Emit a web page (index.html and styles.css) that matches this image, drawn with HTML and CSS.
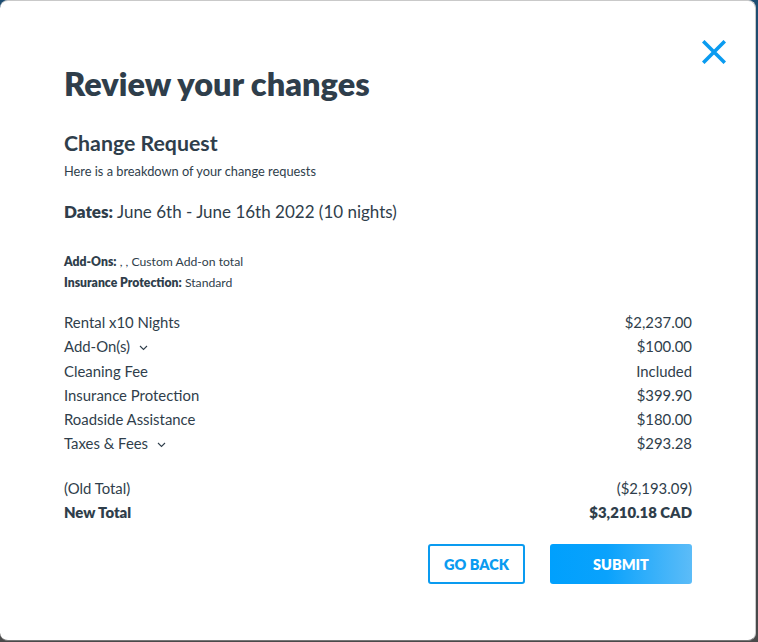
FILE: index.html
```html
<!DOCTYPE html>
<html>
<head>
<meta charset="utf-8">
<link rel="stylesheet" href="styles.css">
</head>
<body>
<div class="modal">
  <button class="close" aria-label="Close">
    <svg width="24" height="24" viewBox="0 0 24 24"><path d="M2.5 2.5 L21.5 21.5 M21.5 2.5 L2.5 21.5" stroke="#0a9bf0" stroke-width="3.6" stroke-linecap="square" fill="none"/></svg>
  </button>
  <h1 class="title">Review your changes</h1>
  <h2 class="subtitle">Change Request</h2>
  <p class="intro">Here is a breakdown of your change requests</p>
  <p class="dates"><b>Dates:</b> June 6th - June 16th 2022 (10 nights)</p>
  <div class="meta">
    <p><b>Add-Ons:</b> , , Custom Add-on total</p>
    <p><b>Insurance Protection:</b> Standard</p>
  </div>
  <div class="items">
    <div class="row"><span>Rental x10 Nights</span><span>$2,237.00</span></div>
    <div class="row"><span>Add-On(s) <svg class="chev" width="9" height="6" viewBox="0 0 9 6"><path d="M1 1 L4.5 4.5 L8 1" stroke="#2f3e4b" stroke-width="1.1" fill="none"/></svg></span><span>$100.00</span></div>
    <div class="row"><span>Cleaning Fee</span><span>Included</span></div>
    <div class="row"><span>Insurance Protection</span><span>$399.90</span></div>
    <div class="row"><span>Roadside Assistance</span><span>$180.00</span></div>
    <div class="row"><span>Taxes &amp; Fees <svg class="chev" width="9" height="6" viewBox="0 0 9 6"><path d="M1 1 L4.5 4.5 L8 1" stroke="#2f3e4b" stroke-width="1.1" fill="none"/></svg></span><span>$293.28</span></div>
  </div>
  <div class="totals">
    <div class="row"><span>(Old Total)</span><span>($2,193.09)</span></div>
    <div class="row total"><span>New Total</span><span>$3,210.18 CAD</span></div>
  </div>
  <div class="actions">
    <button class="btn btn-outline">GO BACK</button>
    <button class="btn btn-primary">SUBMIT</button>
  </div>
</div>
</body>
</html>
```
FILE: styles.css
```css
* { box-sizing: border-box; }
html, body { margin: 0; padding: 0; }
body {
  width: 758px;
  height: 642px;
  background: linear-gradient(#1d4d72 0%, #2a4256 50%, #4a4a4a 100%);
  font-family: "Lato", "Open Sans", sans-serif;
  color: #2f3e4b;
  overflow: hidden;
}
.modal {
  position: relative;
  width: 756px;
  height: 641px;
  background: #fff;
  border-top: 1px solid #c9c9c9;
  border-right: 1px solid #c9c9c9;
  border-bottom: 1px solid #777;
  border-radius: 8px;
  padding: 64px 63px 0 64px;
}
.close {
  position: absolute;
  top: 39px;
  right: 29px;
  background: none;
  border: 0;
  padding: 0;
  width: 24px;
  height: 24px;
  cursor: pointer;
}
.close svg { display: block; }
.title {
  margin: 0;
  font-size: 32.5px;
  font-weight: 800;
  line-height: 38px;
  letter-spacing: 0;
}
.subtitle {
  margin: 27px 0 0 0;
  font-size: 21.3px;
  font-weight: 700;
  line-height: 26px;
}
.intro {
  margin: 7px 0 0 0;
  font-size: 12.8px;
  line-height: 16px;
}
.dates {
  margin: 22px 0 0 0;
  font-size: 17px;
  line-height: 22px;
}
.dates b { font-weight: 800; }
.meta { margin-top: 28px; }
.meta p {
  margin: 0;
  font-size: 12.2px;
  line-height: 21px;
}
.meta b { font-weight: 800; }
.items { margin-top: 17px; }
.row {
  display: flex;
  justify-content: space-between;
  align-items: center;
  font-size: 14.9px;
  line-height: 24.3px;
}
.chev { margin-left: 5px; vertical-align: middle; position: relative; top: -1px; }
.totals { margin-top: 20px; }
.total { font-weight: 800; }
.actions {
  display: flex;
  justify-content: flex-end;
  gap: 25px;
  margin-top: 20px;
}
.btn {
  height: 40px;
  font-family: inherit;
  font-size: 14.5px;
  font-weight: 800;
  border-radius: 3px;
  cursor: pointer;
}
.btn-outline {
  width: 97px;
  background: #fff;
  border: 2px solid #0a9bf0;
  color: #0a9bf0;
}
.btn-primary {
  width: 142px;
  border: 0;
  color: #fff;
  background: linear-gradient(90deg, #00a0fd 0%, #0aa2fc 40%, #5cbcf8 100%);
}
```
